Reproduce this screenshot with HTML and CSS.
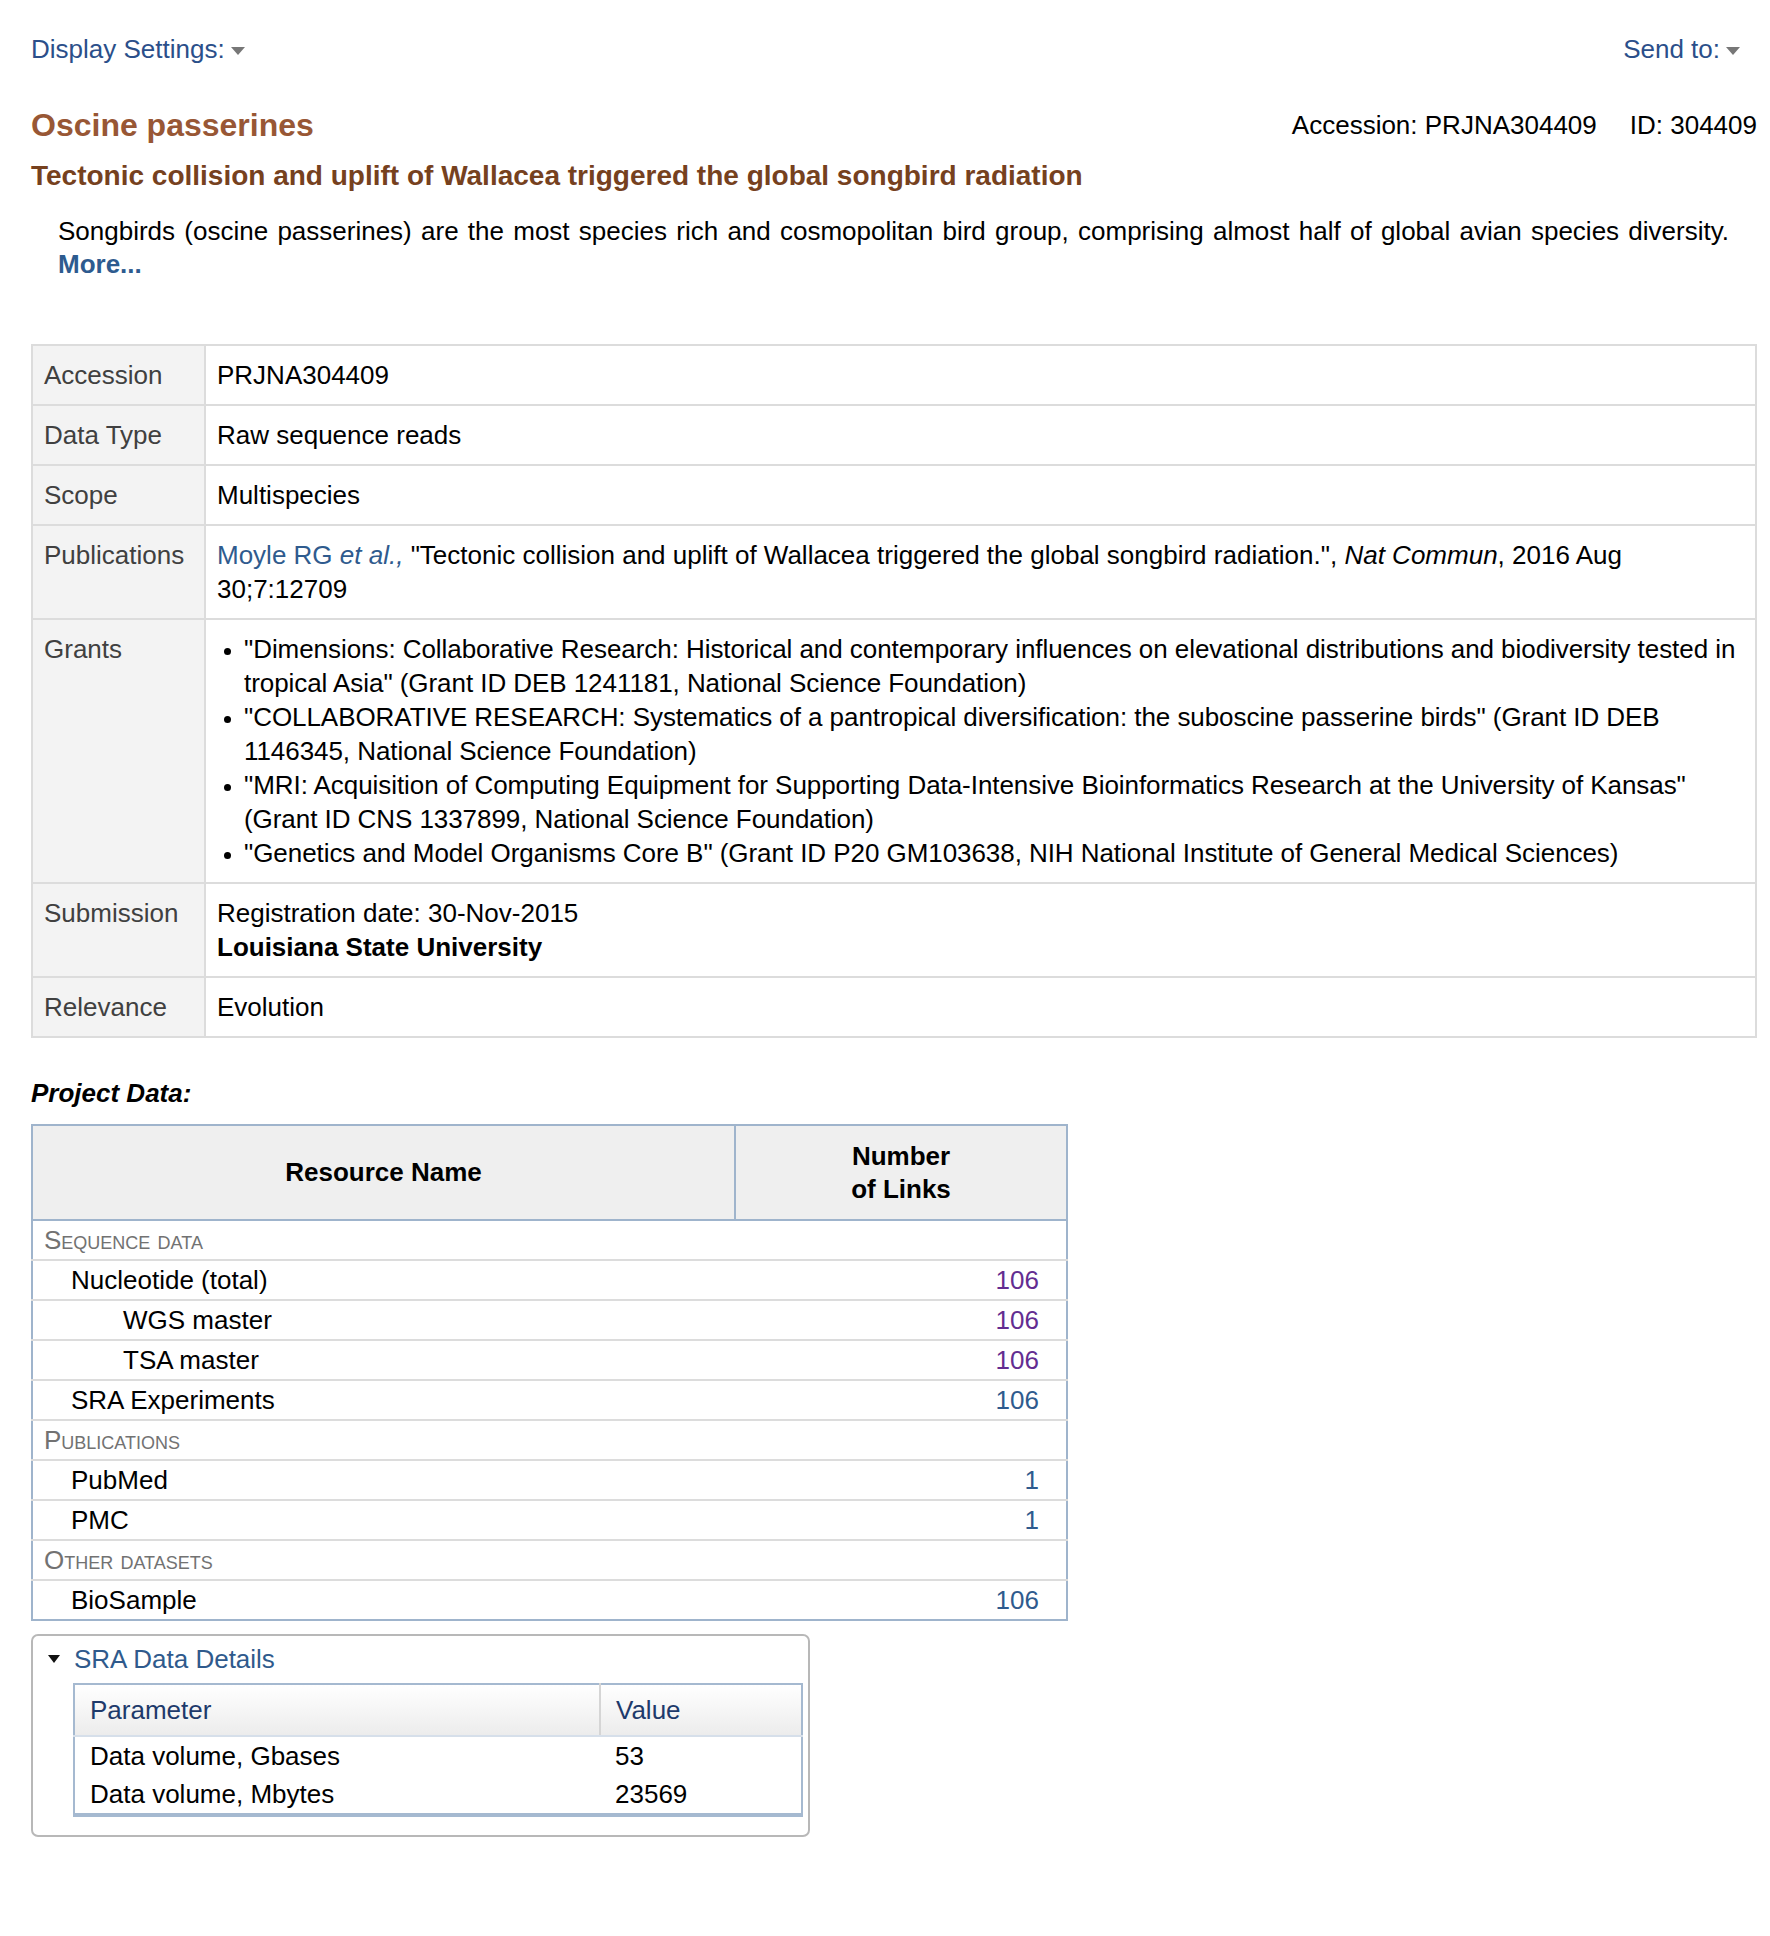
FILE: index.html
```html
<!DOCTYPE html>
<html lang="en">
<head>
<meta charset="utf-8">
<title>Oscine passerines - BioProject</title>
<link rel="stylesheet" href="styles.css">
</head>
<body>
<div class="page">
  <div class="topbar">
    <a class="menu" href="#">Display Settings:<span class="caret"></span></a>
    <a class="menu" href="#">Send to:<span class="caret"></span></a>
  </div>

  <div class="titlerow">
    <h1 class="title">Oscine passerines</h1>
    <div class="ids"><span>Accession: PRJNA304409</span><span>ID: 304409</span></div>
  </div>
  <h2 class="subtitle">Tectonic collision and uplift of Wallacea triggered the global songbird radiation</h2>
  <div class="desc">
    <div class="desc-text">Songbirds (oscine passerines) are the most species rich and cosmopolitan bird group, comprising almost half of global avian species diversity.</div>
    <a class="more" href="#">More...</a>
  </div>

  <table class="details">
    <tr><th>Accession</th><td>PRJNA304409</td></tr>
    <tr><th>Data Type</th><td>Raw sequence reads</td></tr>
    <tr><th>Scope</th><td>Multispecies</td></tr>
    <tr><th>Publications</th><td><a class="link" href="#">Moyle RG</a> <i class="link">et al.,</i> "Tectonic collision and uplift of Wallacea triggered the global songbird radiation.", <i>Nat Commun</i>, 2016 Aug 30;7:12709</td></tr>
    <tr><th>Grants</th><td class="grants-cell">
      <ul class="grants">
        <li>"Dimensions: Collaborative Research: Historical and contemporary influences on elevational distributions and biodiversity tested in tropical Asia" (Grant ID DEB 1241181, National Science Foundation)</li>
        <li>"COLLABORATIVE RESEARCH: Systematics of a pantropical diversification: the suboscine passerine birds" (Grant ID DEB 1146345, National Science Foundation)</li>
        <li>"MRI: Acquisition of Computing Equipment for Supporting Data-Intensive Bioinformatics Research at the University of Kansas" (Grant ID CNS 1337899, National Science Foundation)</li>
        <li>"Genetics and Model Organisms Core B" (Grant ID P20 GM103638, NIH National Institute of General Medical Sciences)</li>
      </ul>
    </td></tr>
    <tr><th>Submission</th><td>Registration date: 30-Nov-2015<br><b>Louisiana State University</b></td></tr>
    <tr><th>Relevance</th><td>Evolution</td></tr>
  </table>

  <div class="pd-title">Project Data:</div>
  <table class="resources">
    <thead>
      <tr><th class="c-name">Resource Name</th><th class="c-num">Number<br>of Links</th></tr>
    </thead>
    <tbody>
      <tr class="cat"><td colspan="2">Sequence data</td></tr>
      <tr><td class="l1">Nucleotide (total)</td><td class="num"><a class="visited" href="#">106</a></td></tr>
      <tr><td class="l2">WGS master</td><td class="num"><a class="visited" href="#">106</a></td></tr>
      <tr><td class="l2">TSA master</td><td class="num"><a class="visited" href="#">106</a></td></tr>
      <tr><td class="l1">SRA Experiments</td><td class="num"><a class="link" href="#">106</a></td></tr>
      <tr class="cat"><td colspan="2">Publications</td></tr>
      <tr><td class="l1">PubMed</td><td class="num"><a class="link" href="#">1</a></td></tr>
      <tr><td class="l1">PMC</td><td class="num"><a class="link" href="#">1</a></td></tr>
      <tr class="cat"><td colspan="2">Other datasets</td></tr>
      <tr><td class="l1">BioSample</td><td class="num"><a class="link" href="#">106</a></td></tr>
    </tbody>
  </table>

  <div class="sra">
    <div class="sra-head"><span class="tri"></span><a class="sra-link" href="#">SRA Data Details</a></div>
    <table class="sra-table">
      <thead><tr><th class="p-col">Parameter</th><th>Value</th></tr></thead>
      <tbody>
        <tr><td>Data volume, Gbases</td><td>53</td></tr>
        <tr><td>Data volume, Mbytes</td><td>23569</td></tr>
      </tbody>
    </table>
  </div>
</div>
</body>
</html>
```

FILE: styles.css
```css
* { box-sizing: border-box; }
html, body { margin: 0; padding: 0; background: #fff; }
body {
  font-family: "Liberation Sans", Arial, Helvetica, sans-serif;
  font-size: 26px;
  line-height: 34px;
  color: #000;
}
a { text-decoration: none; }
.page { padding: 32px 13px 80px 31px; }

.topbar { display: flex; justify-content: space-between; padding-right: 17px; }
.menu { color: #2b4f8a; display: inline-flex; align-items: center; }
.caret {
  display: inline-block; width: 0; height: 0; margin-left: 6px; margin-top: 4px;
  border-left: 7px solid transparent; border-right: 7px solid transparent;
  border-top: 8px solid #777;
}

.titlerow { display: flex; justify-content: space-between; align-items: center; margin-top: 39px; }
.title { margin: 0; font-size: 32px; line-height: 40px; font-weight: bold; color: #985735; }
.ids { display: flex; gap: 33px; }
.subtitle { margin: 14px 0 0 0; font-size: 28px; line-height: 34px; font-weight: bold; color: #76411e; }

.desc { margin: 22px 28px 0 27px; line-height: 33px; }
.desc-text { text-align: justify; text-align-last: justify; }
.more { display: block; font-weight: bold; color: #2d5b8f; }

.details { width: 100%; margin-top: 63px; border-collapse: collapse; border: 2px solid #dcdcdc; }
.details th, .details td { border: 2px solid #dcdcdc; padding: 12px 11px; text-align: left; vertical-align: top; }
.details th { width: 173px; background: #f3f3f3; font-weight: normal; color: #404040; white-space: nowrap; }
.details td.grants-cell { padding-right: 4px; }
.link { color: #2f5b8e; }
.grants { margin: 0; padding-left: 27px; letter-spacing: -0.06px; }
.grants li::marker { font-size: 22px; }

.pd-title { margin-top: 38px; font-weight: bold; font-style: italic; }
.resources { width: 1037px; margin-top: 14px; border-collapse: collapse; border: 2px solid #9fb4cc; }
.resources thead th { background: #efefef; font-weight: bold; text-align: center; height: 95px; padding: 0; line-height: 33px; border: 2px solid #9fb4cc; }
.c-name { width: 703px; }
.resources td { height: 40px; padding: 0 11px; border-top: 2px solid #dcdcdc; line-height: 38px; }
.resources tbody tr:first-child td { border-top: none; }
.cat td { font-variant: small-caps; color: #727272; }
.l1 { padding-left: 38px !important; }
.l2 { padding-left: 90px !important; }
.num { text-align: right; padding-right: 27px !important; }
.visited { color: #632d91; }

.sra { width: 779px; margin-top: 13px; border: 2px solid #b8b8b8; border-radius: 7px; padding: 6px 8px 18px 13px; }
.sra-head { display: flex; align-items: center; height: 34px; }
.tri { width: 0; height: 0; border-left: 6px solid transparent; border-right: 6px solid transparent; border-top: 8px solid #111; margin-left: 2px; margin-right: 14px; }
.sra-link { color: #2f5a8c; }
.sra-table { width: 730px; margin: 7px 0 0 27px; border-collapse: collapse; border: 2px solid #a5b9d0; border-bottom-width: 4px; }
.sra-table thead th {
  text-align: left; font-weight: normal; color: #1e3a6b; height: 52px; padding: 0 15px;
  background: linear-gradient(#ffffff, #ececec); border-bottom: 2px solid #d6dfea;
}
.p-col { width: 526px; border-right: 2px solid #d5d5d5; }
.sra-table td { padding: 0 15px; height: 38px; line-height: 38px; }
```
